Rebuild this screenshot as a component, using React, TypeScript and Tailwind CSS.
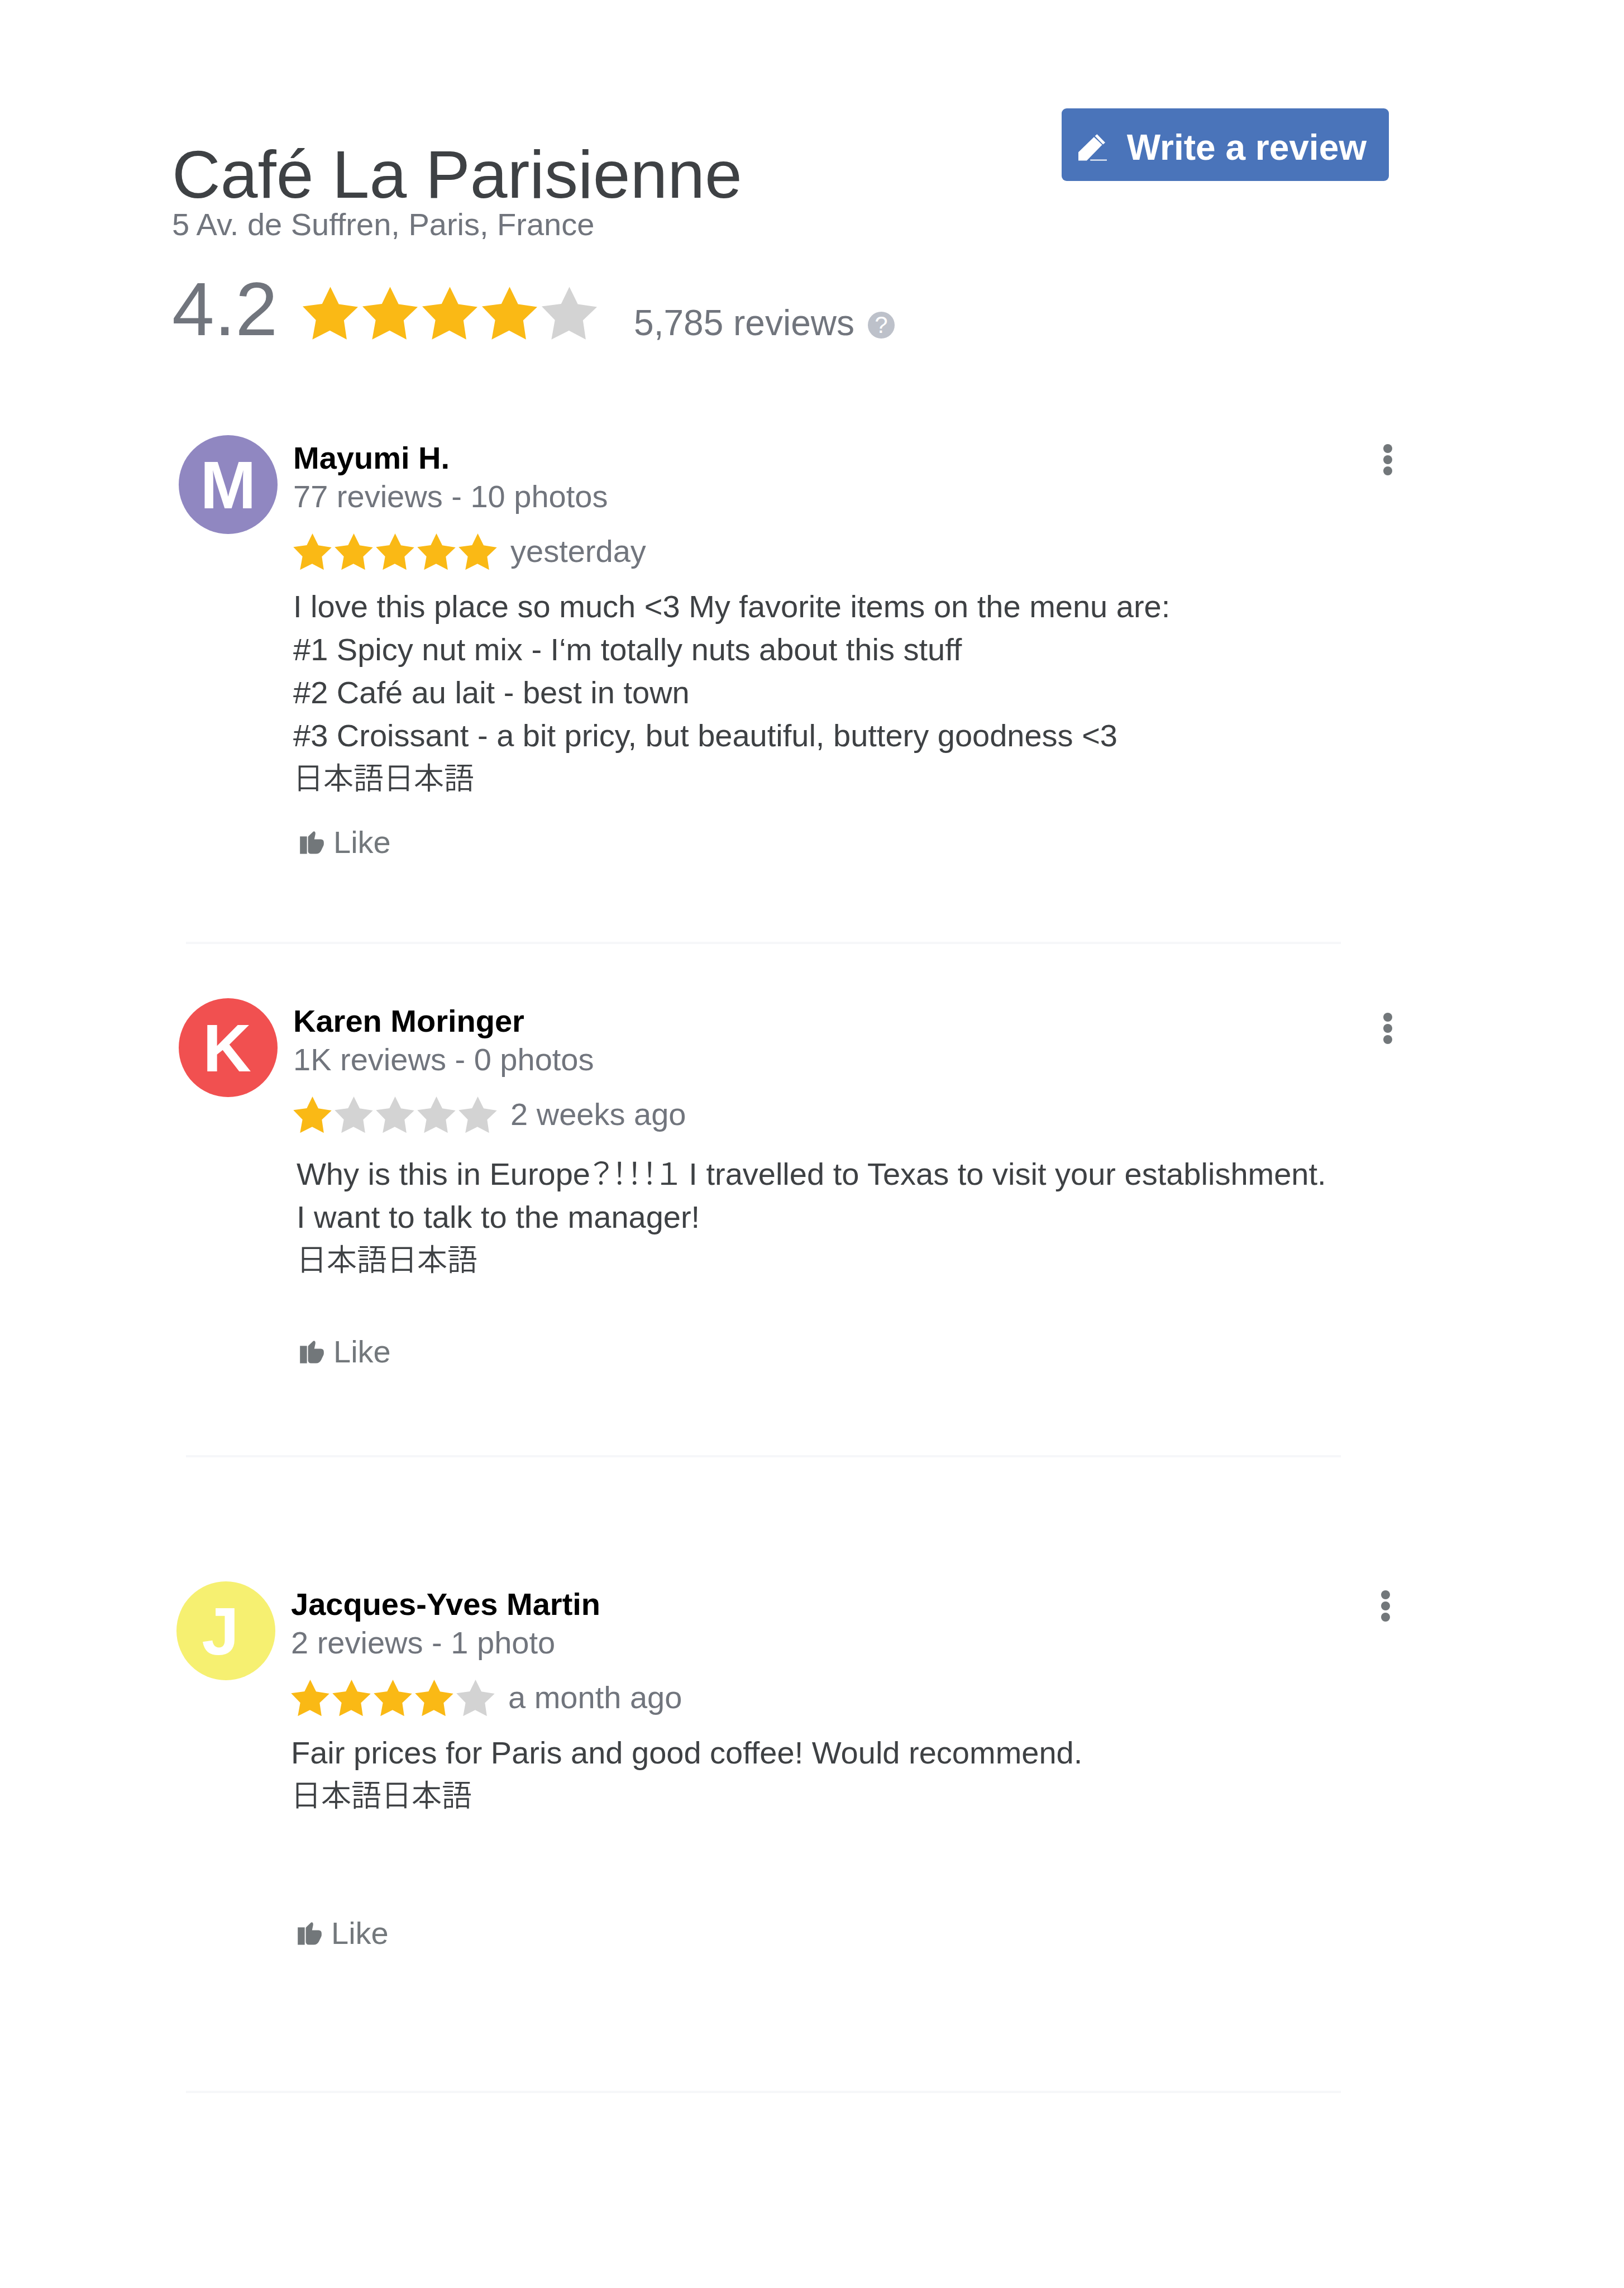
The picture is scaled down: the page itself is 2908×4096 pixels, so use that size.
import React from "react";

type Line = { text: string; cjk?: boolean }[];

type Review = {
  name: string;
  initial: string;
  avatar: string;
  meta: string;
  rating: number;
  time: string;
  lines: Line[];
  card: string;
  menu: string;
  body: string;
  like: string;
  divider: string;
};

const nihongo: Line = [{ text: "日本語日本語", cjk: true }];

const reviews: Review[] = [
  {
    name: "Mayumi H.",
    initial: "M",
    avatar: "bg-[#9087c1]",
    meta: "77 reviews - 10 photos",
    rating: 5,
    time: "yesterday",
    lines: [
      [{ text: "I love this place so much <3 My favorite items on the menu are:" }],
      [{ text: "#1 Spicy nut mix - I‘m totally nuts about this stuff" }],
      [{ text: "#2 Café au lait - best in town" }],
      [{ text: "#3 Croissant - a bit pricy, but beautiful, buttery goodness <3" }],
      nihongo,
    ],
    card: "mt-[158px] pl-3",
    menu: "mt-4",
    body: "mt-[27px]",
    like: "mt-11",
    divider: "mt-[146px]",
  },
  {
    name: "Karen Moringer",
    initial: "K",
    avatar: "bg-[#f15050] pr-1",
    meta: "1K reviews - 0 photos",
    rating: 1,
    time: "2 weeks ago",
    lines: [
      [
        { text: "Why is this in Europe" },
        { text: "？！！！１", cjk: true },
        { text: " I travelled to Texas to visit your establishment." },
      ],
      [{ text: "I want to talk to the manager!" }],
      nihongo,
    ],
    card: "mt-[97px] pl-3",
    menu: "mt-[26px]",
    body: "mt-[35px] pl-1.5",
    like: "mt-[94px]",
    divider: "mt-[153px]",
  },
  {
    name: "Jacques-Yves Martin",
    initial: "J",
    avatar: "bg-[#f6f071] pr-5",
    meta: "2 reviews - 1 photo",
    rating: 4,
    time: "a month ago",
    lines: [
      [{ text: "Fair prices for Paris and good coffee! Would recommend." }],
      nihongo,
    ],
    card: "mt-[222px] pl-2 pr-1",
    menu: "mt-4",
    body: "mt-[27px]",
    like: "mt-44",
    divider: "mt-[250px]",
  },
];

function Stars({ rating, large }: { rating: number; large?: boolean }) {
  return (
    <div
      role="img"
      aria-label={`${rating} out of 5 stars`}
      className={large ? "flex shrink-0 gap-2" : "flex shrink-0 gap-[5px]"}
    >
      {[0, 1, 2, 3, 4].map((i) => (
        <svg
          key={i}
          viewBox="0 0 118 112"
          className={`${large ? "h-[95px] w-[99px]" : "h-[65px] w-[69px]"} ${
            i < rating ? "fill-[#fab915]" : "fill-[#d3d3d3]"
          }`}
        >
          <path d="M59 0 77.1 36.8 118 43 88 71.5 94 112.3 58 93.3 20.7 112.2 28.2 71 0 41.7 41.5 36.3Z" />
        </svg>
      ))}
    </div>
  );
}

function PencilIcon() {
  return (
    <svg viewBox="0 0 61 57" className="h-12 w-[51px] shrink-0 fill-white" aria-hidden="true">
      <path d="M33.4 6 50.9 22.7 17.9 56.5H0V38.7Z" />
      <path d="M39.9 0 57.4 18 52.8 22 35.4 4Z" />
      <path d="M25.4 54.3H61V56.7H25.4Z" />
    </svg>
  );
}

function ThumbIcon() {
  return (
    <svg viewBox="0 0 51 49" className="h-[41px] w-[43px] shrink-0 fill-[#72777a]" aria-hidden="true">
      <path d="M0 11.2H14.9V48.5H0Z" />
      <path d="M17.2 13.2Q17.2 11.6 18.4 10.4L28.4 1Q30 -.4 31.6 1Q33 2.3 33 4.4Q33 6.4 32.4 9L30.6 17.3H44.5Q51 17.6 51 24V27.5Q51 29.5 50.2 31.2L45.4 41.2Q41.8 48.5 34.4 48.5H23.6Q17.2 48.3 17.2 42.2Z" />
    </svg>
  );
}

function ReviewCard({ review }: { review: Review }) {
  return (
    <>
      <article className={`flex items-start ${review.card}`}>
        <div
          className={`flex size-[177px] shrink-0 items-center justify-center rounded-full text-[120px] leading-[120px] font-bold text-white ${review.avatar}`}
        >
          {review.initial}
        </div>
        <div className="ml-7 min-w-0 flex-1 pt-1.5 text-[56px]">
          <h2 className="leading-[70px] font-bold text-black">{review.name}</h2>
          <p className="leading-[68px] text-[#71757d]">{review.meta}</p>
          <div className="mt-8 flex items-start gap-6">
            <Stars rating={review.rating} />
            <span className="leading-16 text-[#71757d]">{review.time}</span>
          </div>
          <div className={`leading-[77px] text-[#3e4144] ${review.body}`}>
            {review.lines.map((line, i) => (
              <p key={i} className="h-[77px] whitespace-pre">
                {line.map((part, j) =>
                  part.cjk ? (
                    <span
                      key={j}
                      lang="ja"
                      className="[font-family:'Noto_Sans_CJK_JP',sans-serif] text-[54px] leading-none font-[350] [font-feature-settings:'palt']"
                    >
                      {part.text}
                    </span>
                  ) : (
                    <span key={j}>{part.text}</span>
                  ),
                )}
              </p>
            ))}
          </div>
          <button
            type="button"
            className={`ml-3 flex items-center gap-[17px] leading-16 text-[#73787c] ${review.like}`}
          >
            <ThumbIcon />
            Like
          </button>
        </div>
        <button
          type="button"
          aria-label="More options"
          className={`flex shrink-0 flex-col gap-1 ${review.menu}`}
        >
          <span className="size-4 rounded-full bg-[#72777a]" />
          <span className="size-4 rounded-full bg-[#72777a]" />
          <span className="size-4 rounded-full bg-[#72777a]" />
        </button>
      </article>
      <hr className={`mr-[92px] ml-[25px] border-t-4 border-[#f6f7f9] ${review.divider}`} />
    </>
  );
}

export default function App() {
  return (
    <main className="min-h-screen bg-white pt-[194px] pr-[415px] pl-[308px] font-['Liberation_Sans',Arial,'Noto_Sans_CJK_JP',sans-serif]">
      <header className="flex items-start justify-between pr-1.5">
        <div className="pt-[59px] text-[#71757d]">
          <h1 className="text-[120px] leading-[118px] text-[#3e4144]">Café La Parisienne</h1>
          <p className="text-[56px] leading-[62px]">5 Av. de Suffren, Paris, France</p>
          <div className="mt-[52px] flex items-start">
            <span className="text-[136px] leading-[136px]">4.2</span>
            <div className="mt-7 ml-[45px]">
              <Stars rating={4} large />
            </div>
            <span className="mt-[61px] ml-[66px] text-[64px] leading-16">5,785 reviews</span>
            <button
              type="button"
              aria-label="About these reviews"
              className="mt-[73px] ml-6 flex size-12 items-center justify-center rounded-full bg-[#bdc1ca] text-[42px] leading-12 text-white"
            >
              ?
            </button>
          </div>
        </div>
        <button
          type="button"
          className="flex h-[130px] shrink-0 items-center gap-9 rounded-[9px] bg-[#4a74ba] pt-2.5 pr-10 pl-[30px] text-[64px] leading-16 font-bold text-white"
        >
          <PencilIcon />
          Write a review
        </button>
      </header>
      {reviews.map((review) => (
        <ReviewCard key={review.name} review={review} />
      ))}
    </main>
  );
}
